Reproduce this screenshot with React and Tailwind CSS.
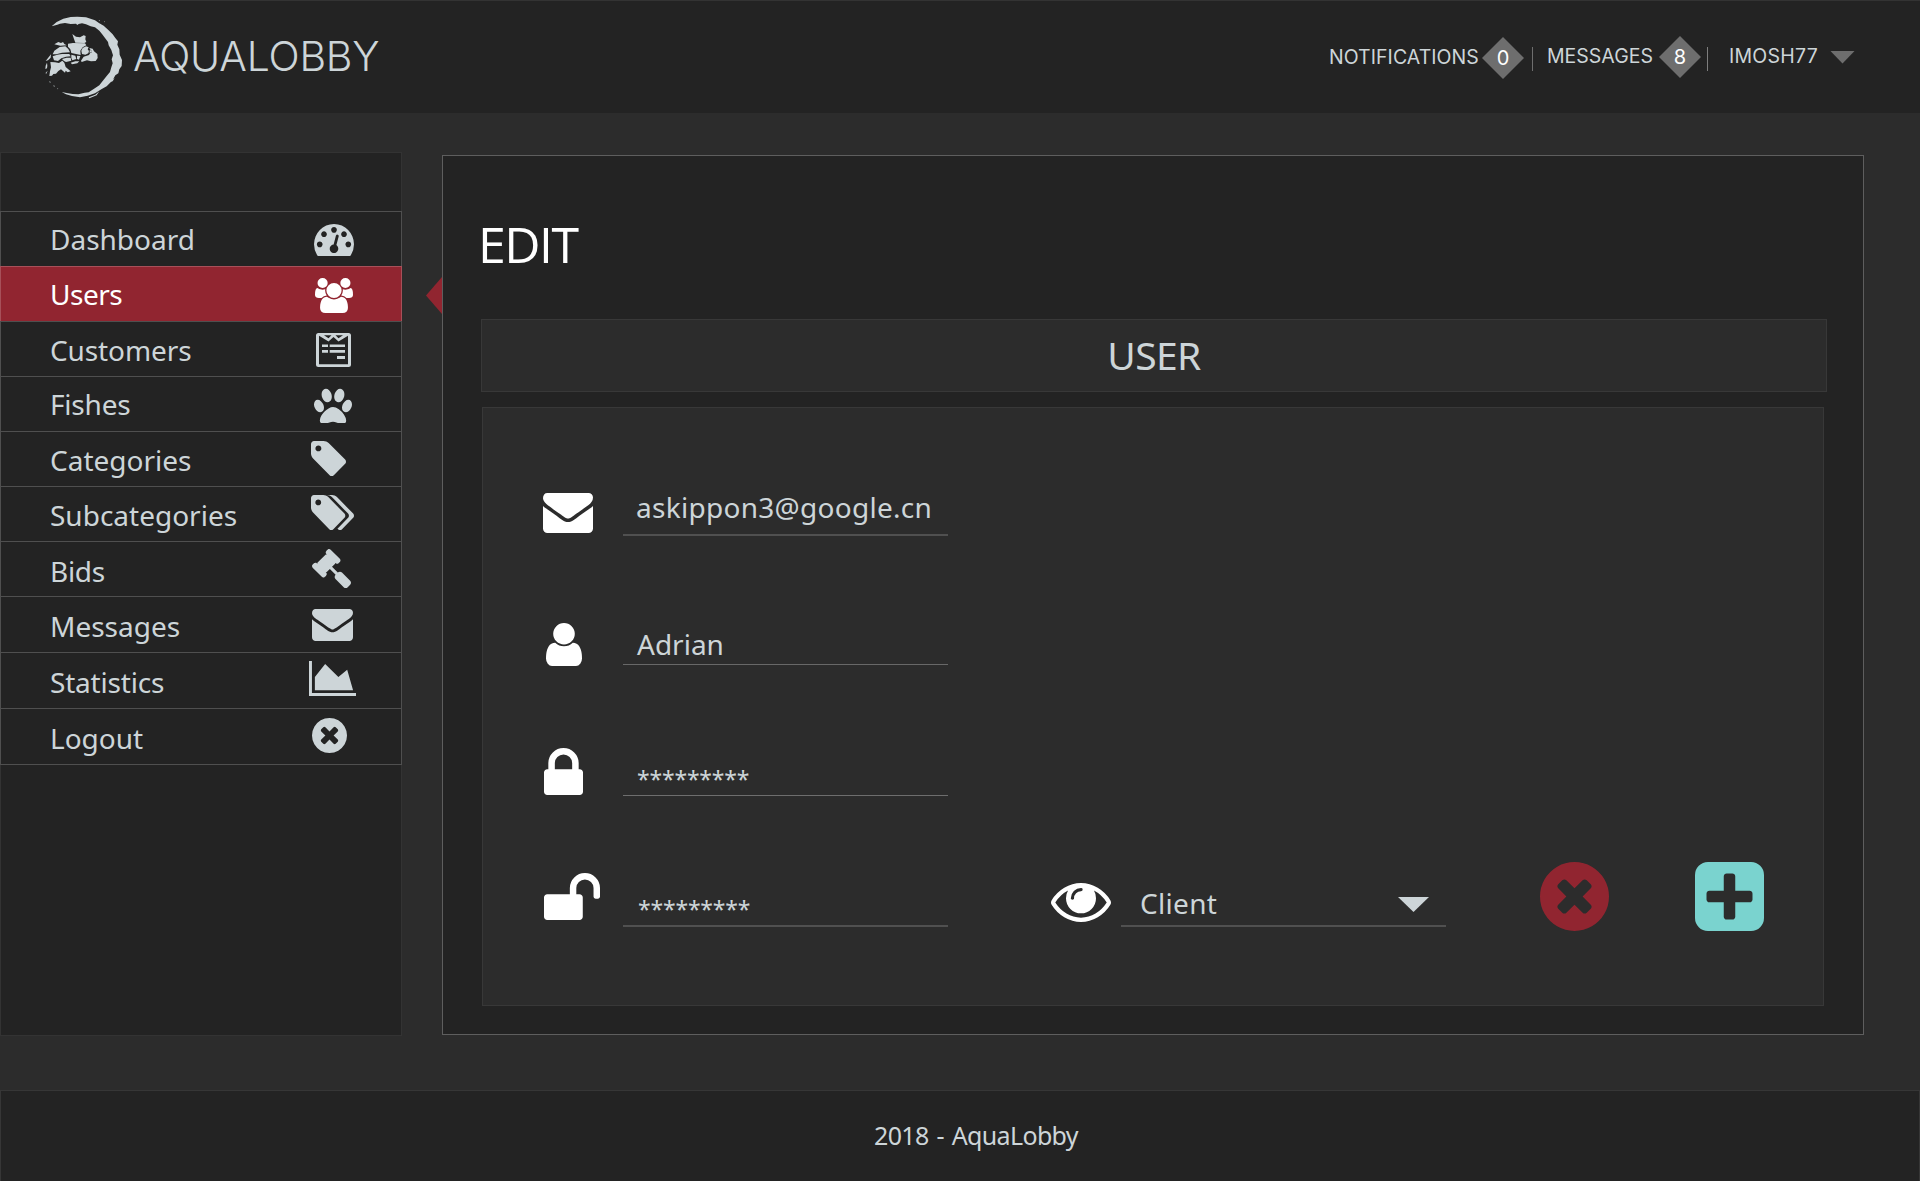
import React from 'react';

/* Icon outlines on a 1792-unit grid, each with the box that its ink fills. */
const ICONS = {
  dashboard: { box: '0 256 1792 1408', d: 'M384 1152q0-53-37.5-90.5t-90.5-37.5-90.5 37.5-37.5 90.5 37.5 90.5 90.5 37.5 90.5-37.5 37.5-90.5zm192-448q0-53-37.5-90.5t-90.5-37.5-90.5 37.5-37.5 90.5 37.5 90.5 90.5 37.5 90.5-37.5 37.5-90.5zm428 481l101-382q6-26-7.5-48.5t-38.5-29.5-48 6.5-30 39.5l-101 382q-60 5-107 43.5t-63 98.5q-20 77 20 146t117 89 146-20 89-117q16-60-6-117t-72-91zm660-33q0-53-37.5-90.5t-90.5-37.5-90.5 37.5-37.5 90.5 37.5 90.5 90.5 37.5 90.5-37.5 37.5-90.5zm-640-640q0-53-37.5-90.5t-90.5-37.5-90.5 37.5-37.5 90.5 37.5 90.5 90.5 37.5 90.5-37.5 37.5-90.5zm448 192q0-53-37.5-90.5t-90.5-37.5-90.5 37.5-37.5 90.5 37.5 90.5 90.5 37.5 90.5-37.5 37.5-90.5zm320 448q0 261-141 483-19 29-54 29h-1402q-35 0-54-29-141-221-141-483 0-182 71-348t191-286 286-191 348-71 348 71 286 191 191 286 71 348z' },
  users: { box: '0 0 1920 1792', d: 'M593 896q-162 5-265 128h-134q-82 0-138-40.5t-56-118.5q0-353 124-353 6 0 43.5 21t97.5 42.5 119 21.5q67 0 133-23-5 37-5 66 0 139 81 256zm1071 637q0 120-73 189.5t-194 69.5h-874q-121 0-194-69.5t-73-189.5q0-53 3.5-103.5t14-109 26.5-108.5 43-97.5 62-81 85.5-53.5 111.5-20q10 0 43 21.5t73 48 107 48 135 21.5 135-21.5 107-48 73-48 43-21.5q61 0 111.5 20t85.5 53.5 62 81 43 97.5 26.5 108.5 14 109 3.5 103.5zm-1024-1277q0 106-75 181t-181 75-181-75-75-181 75-181 181-75 181 75 75 181zm704 384q0 159-112.5 271.5t-271.5 112.5-271.5-112.5-112.5-271.5 112.5-271.5 271.5-112.5 271.5 112.5 112.5 271.5zm576 225q0 78-56 118.5t-138 40.5h-134q-103-123-265-128 81-117 81-256 0-29-5-66 66 23 133 23 59 0 119-21.5t97.5-42.5 43.5-21q124 0 124 353zm-128-609q0 106-75 181t-181 75-181-75-75-181 75-181 181-75 181 75 75 181z' },
  customers: { box: '0 0 35 34', d: 'M2.500 0h30Q35 0 35 2.500v29Q35 34 32.500 34h-30Q0 34 0 31.500v-29Q0 0 2.500 0zM3 2.800v28.400h29V2.800l-9.500 5.700-5-4.500-5 4.500zM8 2.300l4.500 3 3-3zM19.500 2.300l3 3 4.500-3zM6 11.500h6V14H6zM13.700 11.500H29V14H13.700zM6 17h6v2.800H6zM13.700 17H29v2.800H13.700zM21 23h8v3h-8z' },
  paw: { box: '0 128 1664 1536', d: 'M780 508q0 60-19 113.5t-63 92.5-105 39q-76 0-138-57.5t-92-135.5-30-151q0-60 19-113.5t63-92.5 105-39q77 0 138.5 57.5t91.5 135 30 151.5zm-342 483q0 80-42 139t-119 59q-76 0-141.5-55.5t-100.5-133.5-35-152q0-80 42-139.5t119-59.5q76 0 141.5 55.5t100.5 134 35 152.5zm394-27q118 0 255 97.5t229 237 92 254.5q0 46-17 76.5t-48.5 45-64.5 20-76 5.5q-68 0-187.5-45t-182.5-45q-66 0-192.5 44.5t-200.5 44.5q-183 0-183-146 0-86 56-191.5t139.5-192.5 187.5-146 193-59zm239-211q-61 0-105-39t-63-92.5-19-113.5q0-74 30-151.5t91.5-135 138.5-57.5q61 0 105 39t63 92.5 19 113.5q0 73-30 151t-92 135.5-138 57.5zm432-104q77 0 119 59.5t42 139.5q0 74-35 152t-100.5 133.5-141.5 55.5q-77 0-119-59t-42-139q0-74 35-152.5t100.5-134 141.5-55.5z' },
  tag: { box: '0 128 1515 1515', d: 'M448 448q0-53-37.5-90.5t-90.5-37.5-90.5 37.5-37.5 90.5 37.5 90.5 90.5 37.5 90.5-37.5 37.5-90.5zm1067 576q0 53-37 90l-491 492q-39 37-91 37-53 0-90-37l-715-716q-38-37-64.5-101t-26.5-117v-416q0-52 38-90t90-38h416q53 0 117 26.5t102 64.5l715 714q37 39 37 91z' },
  tags: { box: '0 128 1899 1515', d: 'M448 448q0-53-37.5-90.5t-90.5-37.5-90.5 37.5-37.5 90.5 37.5 90.5 90.5 37.5 90.5-37.5 37.5-90.5zm1067 576q0 53-37 90l-491 492q-39 37-91 37-53 0-90-37l-715-716q-38-37-64.5-101t-26.5-117v-416q0-52 38-90t90-38h416q53 0 117 26.5t102 64.5l715 714q37 39 37 91zm384 0q0 53-37 90l-491 492q-39 37-91 37-36 0-59-14t-53-45l470-470q37-37 37-90 0-52-37-91l-715-714q-38-38-102-64.5t-117-26.5h224q53 0 117 26.5t102 64.5l715 714q37 39 37 91z' },
  gavel: { box: '40 40 1731 1731', d: 'M1771 1536q0 53-37 90l-107 108q-39 37-91 37-53 0-90-37l-363-364q-38-36-38-90 0-53 43-96l-256-256-126 126q-14 14-34 14t-34-14q2 2 12.5 12t12.5 13 10 11.5 10 13.5 6 13.5 5.5 16.5 1.5 18q0 38-28 68-3 3-16.5 18t-19 20.5-18.5 16.5-22 15.5-22 9-26 4.500q-40 0-68-28l-408-408q-28-28-28-68 0-13 4.500-26t9-22 15.500-22 16.500-18.500 20.500-19 18-16.500q30-28 68-28 10 0 18 1.500t16.500 5.500 13.500 6 13.500 10 11.500 10 13 12.500 12 12.500q-14-14-14-34t14-34l348-348q14-14 34-14t34 14q-2-2-12.500-12t-12.500-13-10-11.500-10-13.500-6-13.500-5.500-16.500-1.500-18q0-38 28-68 3-3 16.500-18t19-20.500 18.500-16.500 22-15.500 22-9 26-4.500q40 0 68 28l408 408q28 28 28 68 0 13-4.500 26t-9 22-15.500 22-16.500 18.500-20.500 19-18 16.500q-30 28-68 28-10 0-18-1.500t-16.500-5.500-13.500-6-13.500-10-11.500-10-13-12.500-12-12.500q14 14 14 34t-14 34l-126 126 256 256q43-43 96-43 52 0 91 37l363 363q37 39 37 91z' },
  envelope: { box: '0 256 1792 1408', d: 'M1792 710v794q0 66-47 113t-113 47h-1472q-66 0-113-47t-47-113v-794q44 49 101 87 362 246 497 345 57 42 92.5 65.5t94.5 48 110 24.5h2q51 0 110-24.5t94.5-48 92.5-65.5q170-123 498-345 57-39 100-87zm0-294q0 79-49 151t-122 123q-376 261-468 325-10 7-42.500 31t-54 38.500-52 32.500-57.500 27-50 9h-2q-23 0-50-9t-57.500-27-52-32.500-54-38.500-42.500-31q-91-64-262-182.500t-205-142.500q-62-42-117-115.500t-55-136.500q0-78 41.500-130t118.500-52h1472q65 0 112.500 47t47.500 113z' },
  chart: { box: '0 128 2048 1536', d: 'M2048 1536v128h-2048v-1536h128v1408h1920zm-384-1024l256 896h-1664v-576l448-576 576 576z' },
  times: { box: '128 128 1536 1536', d: 'M1277 1122q0-26-19-45l-181-181 181-181q19-19 19-45 0-27-19-46l-90-90q-19-19-46-19-26 0-45 19l-181 181-181-181q-19-19-45-19-27 0-46 19l-90 90q-19 19-19 46 0 26 19 45l181 181-181 181q-19 19-19 45 0 27 19 46l90 90q19 19 46 19 26 0 45-19l181-181 181 181q19 19 45 19 27 0 46-19l90-90q19-19 19-46zm387-226q0 209-103 385.5t-279.5 279.5-385.5 103-385.5-103-279.5-279.5-103-385.5 103-385.5 279.5-279.5 385.5-103 385.5 103 279.5 279.5 103 385.5z' },
  user: { box: '256 128 1280 1536', d: 'M1536 1399q0 109-62.5 187t-150.5 78h-854q-88 0-150.500-78t-62.500-187q0-85 8.500-160.500t31.500-152 58.500-131 94-89 134.500-34.500q131 128 313 128t313-128q76 0 134.500 34.500t94 89 58.500 131 31.500 152 8.500 160.500zm-256-887q0 159-112.500 271.500t-271.500 112.500-271.500-112.500-112.500-271.500 112.500-271.500 271.500-112.500 271.500 112.500 112.500 271.500z' },
  lock: { box: '320 128 1152 1408', d: 'M640 768h512v-192q0-106-75-181t-181-75-181 75-75 181v192zm832 96v576q0 40-28 68t-68 28h-960q-40 0-68-28t-28-68v-576q0-40 28-68t68-28h32v-192q0-184 132-316t316-132 316 132 132 316v192h32q40 0 68 28t28 68z' },
  unlock: { box: '64 128 1664 1408', d: 'M1728 576v256q0 26-19 45t-45 19h-64q-26 0-45-19t-19-45v-256q0-106-75-181t-181-75-181 75-75 181v192h96q40 0 68 28t28 68v576q0 40-28 68t-68 28h-960q-40 0-68-28t-28-68v-576q0-40 28-68t68-28h672v-192q0-185 131.5-316.5t316.5-131.5 316.5 131.5 131.5 316.5z' },
  eye: { box: '0 384 1792 1152', d: 'M1664 960q-152-236-381-353 61 104 61 225 0 185-131.5 316.5t-316.5 131.5-316.5-131.5-131.5-316.5q0-121 61-225-229 117-381 353 133 205 333.5 326.5t434.5 121.5 434.5-121.5 333.5-326.5zm-720-384q0-20-14-34t-34-14q-125 0-214.5 89.5t-89.5 214.5q0 20 14 34t34 14 34-14 14-34q0-86 61-147t147-61q20 0 34-14t14-34zm848 384q0 34-20 69-140 230-376.5 368.5t-499.5 138.5-499.5-139-376.5-368q-20-35-20-69t20-69q140-229 376.5-368t499.5-139 499.5 139 376.5 368q20 35 20 69z' },
  plus: { box: '128 128 1536 1536', d: 'M1408 960v-128q0-26-19-45t-45-19h-320v-320q0-26-19-45t-45-19h-128q-26 0-45 19t-19 45v320h-320q-26 0-45 19t-19 45v128q0 26 19 45t45 19h320v320q0 26 19 45t45 19h128q26 0 45-19t19-45v-320h320q26 0 45-19t19-45zm256-544v960q0 119-84.5 203.5t-203.5 84.5h-960q-119 0-203.5-84.5t-84.5-203.5v-960q0-119 84.5-203.5t203.5-84.5h960q119 0 203.5 84.5t84.5 203.5z' },
};

function Icon({ name, className }) {
  const { box, d } = ICONS[name];
  return (
    <svg viewBox={box} preserveAspectRatio="none" fill="currentColor" fillRule={name === 'customers' ? 'evenodd' : 'nonzero'} className={`shrink-0 ${className}`} aria-hidden="true">
      <path d={d} />
    </svg>
  );
}

const MENU = [
  { label: 'Dashboard', icon: 'dashboard', row: 'h-[55px]', text: '', pos: 'ml-1 mt-3 w-10 h-8' },
  { label: 'Users', icon: 'users', row: 'h-[55px]', text: 'tracking-[-0.5px]', pos: 'ml-[5px] mt-[11px] w-[38px] h-[35px]', active: true },
  { label: 'Customers', icon: 'customers', row: 'h-[55px]', text: 'pt-px tracking-[-0.1px]', pos: 'ml-1.5 mt-[11px] w-[35px] h-[34px]' },
  { label: 'Fishes', icon: 'paw', row: 'h-[55px]', text: 'tracking-[-0.2px]', pos: 'ml-1 mt-[11px] w-[38px] h-[35px]' },
  { label: 'Categories', icon: 'tag', row: 'h-[55px]', text: 'pt-px', pos: 'ml-px mt-[9px] w-[35px] h-[35px]' },
  { label: 'Subcategories', icon: 'tags', row: 'h-[55px]', text: 'pt-px', pos: 'ml-px mt-2 w-[43px] h-[35px]' },
  { label: 'Bids', icon: 'gavel', row: 'h-[55px]', text: 'pt-0.5 tracking-[-0.3px]', pos: 'ml-0.5 mt-[7px] w-[39px] h-[39px]' },
  { label: 'Messages', icon: 'envelope', row: 'h-[56px]', text: 'pt-0.5', pos: 'ml-0.5 mt-3 w-[41px] h-8' },
  { label: 'Statistics', icon: 'chart', row: 'h-[56px]', text: 'pt-0.5 tracking-[-0.2px]', pos: '-ml-px mt-2 w-[47px] h-[35px]' },
  { label: 'Logout', icon: 'times', row: 'h-[57px] border-b', text: 'pt-0.5', pos: 'ml-0.5 mt-[9px] w-[35px] h-[35px]' },
];

function Logo() {
  return (
    <svg viewBox="0 0 270 285" className="h-[95px] w-[90px]" fill="currentColor" aria-hidden="true">
      <path d="M47 49L62 36 82 26 104 21 124 20 150 22 177 31 190 40 203 47 217 60 230 73 238 84 246 94 244 104 250 118 251 134 258 150 257 168 250 178 247 190 238 196 230 211 212 229 196 238 177 250 155 257 132 262 108 258 90 253 77 246 92 249 110 252 127 253 146 248 158 247 172 238 190 226 200 213 212 198 222 186 226 172 230 160 227 148 231 136 226 120 218 106 216 96 207 84 198 72 190 62 177 52 164 49 150 43 138 40 128 42 124 45 120 41 104 42 87 39 72 41 64 44z" />
      <path d="M188 30l4 2-2 2zM204 34l3 1-2 2zM222 216l14-12-6 10zM158 262l20-8 12-10-8 12-22 9zM40 213l4 3-2 3zM52 226l5 2-3 2zM63 235l4 1-2 2z" />
      <path d="M109 72l11 8 12 2 11-6 6 2-1 10 3 8-6 3-27-1-4-11z" />
      <path d="M96 101l15-2 36 1 4 6-11 6-7 10 1 13-28-6-3-11-7-8z" />
      <path d="M150 109l8 3-3 6 4 5-2 7-9 4-10-2-2-10 4-8z" />
      <path fillRule="evenodd" d="M160 114l10 2 4 8 10 8 1 12-6 9-14 1-12-3-16 5-2-4 8-12 16-5 7-11zM161 121h5v8h-5z" />
      <path d="M55 103l12-7 8 3 6-3 4 6 7 4-19 1z" />
      <path d="M71 111l17-2 9 8 5 10-24 1-17 5-11 0 5-11z" />
      <path d="M50 139l14-5 14-2 22 0 4 7-14 1-14 5-10 8-12-2z" />
      <path d="M43 156l14 1 12 2 10-7 6 6 4 13 15 13-9 3-6-5-2 6-12-10-8 5-7 8-8 1-4 5-8 1 2-14 3-12z" />
      <path d="M45 133l-6 7-10 13 7-2 8-8zM33 158l-4 9-1 10 5-2 1-8zM35 182l-6 6 1 5zM78 147l14-4 12 0 2 9-16 4-6-3z" />
      <path d="M106 134l12 3 3 10-12 4-3-7zM123 137l10 1-4 11-6-2zM104 158l14-4 12 0-6 6-16 3z" />
    </svg>
  );
}

function Diamond({ value, className }) {
  return (
    <span className={`grid h-[42px] w-[42px] shrink-0 place-items-center bg-[#6e6e6e] font-normal text-[20px] text-white [clip-path:polygon(50%_0,100%_50%,50%_100%,0_50%)] ${className}`}>
      {value}
    </span>
  );
}

function Header() {
  return (
    <header className="flex h-[113px] items-center border-t border-[#333] bg-[#232323] pl-9 font-['Inter',sans-serif]">
      <Logo />
      <h1 className="mb-0.5 ml-[7px] text-[41px] leading-none font-[350] tracking-[-0.2px]">AQUALOBBY</h1>
      <nav className="ml-auto mr-[65px] flex items-center text-[19.5px] leading-none font-[370]">
        <span className="w-[154px] pl-px pt-0.5 tracking-[0.05px]">NOTIFICATIONS</span>
        <Diamond value="0" className="mt-0.5" />
        <span className="ml-2 mt-1 h-6 w-px bg-[#6e6e6e]" />
        <span className="ml-3.5 w-28">MESSAGES</span>
        <Diamond value="8" className="" />
        <span className="ml-1.5 mt-1 h-6 w-px bg-[#7e7e7e]" />
        <span className="ml-[21px] w-[101px] tracking-[0.25px]">IMOSH77</span>
        <span className="h-[13px] w-[25px] bg-[#6e6e6e] [clip-path:polygon(0_0,100%_0,50%_100%)]" />
      </nav>
    </header>
  );
}

function Sidebar() {
  return (
    <aside className="flex h-[884px] w-[402px] flex-col bg-[#232323]">
      <div className="h-[59px] border-x border-t border-[#333]" />
      <ul>
        {MENU.map((m) => (
          <li key={m.label} className={`flex border-x border-t border-white/20 pl-[49px] ${m.row} ${m.active ? 'bg-[#912530] text-white' : ''}`}>
            <span className={`w-[260px] text-[28px] leading-[54px] ${m.text}`}>{m.label}</span>
            <Icon name={m.icon} className={m.pos} />
          </li>
        ))}
      </ul>
      <div className="grow border-x border-b border-[#333]" />
    </aside>
  );
}

function Field({ icon, iconClass, rowClass, textClass, value, lineClass }) {
  return (
    <div className={`flex ${rowClass}`}>
      <div className="w-[140px] text-white">
        <Icon name={icon} className={iconClass} />
      </div>
      <div className={`flex w-[325px] items-end pl-[13px] leading-none ${lineClass}`}>
        <span className={textClass}>{value}</span>
      </div>
    </div>
  );
}

function UserForm() {
  return (
    <section className="ml-[39px] mt-[15px] h-[599px] w-[1342px] border border-[#383838] bg-[#2c2c2c]">
      <Field icon="envelope" iconClass="ml-[60px] mt-[85px] h-10 w-[50px]" rowClass="h-[128px]" value="askippon3@google.cn" textClass="pb-[13px] text-[28px] tracking-[0.28px]" lineClass="border-b-2 border-[#505050]" />
      <Field icon="user" iconClass="ml-[63px] mt-[87px] h-[43px] w-9" rowClass="h-[129px]" value="Adrian" textClass="pb-1.5 text-[28px] ml-[1px]" lineClass="border-b border-[#686868]" />
      <Field icon="lock" iconClass="ml-[61px] mt-[83px] h-[47px] w-[39px]" rowClass="h-[131px]" value="*********" textClass="pb-1 pl-px text-[23px] tracking-[-0.2px]" lineClass="border-b border-[#6e6e6e]" />
      <div className="flex">
        <Field icon="unlock" iconClass="ml-[61px] mt-[77px] h-[47px] w-14" rowClass="h-[131px]" value="*********" textClass="pb-1 pl-0.5 text-[23px] tracking-[-0.2px]" lineClass="border-b-2 border-[#505050]" />
        <Icon name="eye" className="ml-[103px] mt-[87px] h-[39px] w-[60px] text-white" />
        <div className="ml-2.5 flex h-[131px] w-[325px] items-end border-b-2 border-[#505050] pl-[19px] leading-none">
          <span className="w-[258px] pb-2 text-[28px] tracking-[0.3px]">Client</span>
          <span className="mb-[13px] h-[15px] w-[31px] bg-[#cdd5d8] [clip-path:polygon(0_0,100%_0,50%_100%)]" />
        </div>
        <button type="button" aria-label="Cancel" className="ml-[94px] mt-[66px] h-[69px] text-[#912530]">
          <Icon name="times" className="h-[69px] w-[69px]" />
        </button>
        <button type="button" aria-label="Add" className="ml-[86px] mt-[66px] h-[69px] text-[#7ad3cf]">
          <Icon name="plus" className="h-[69px] w-[69px]" />
        </button>
      </div>
    </section>
  );
}

export default function App() {
  return (
    <div className="flex h-[1181px] w-[1920px] flex-col overflow-hidden bg-[#2c2c2c] font-['Noto_Sans',sans-serif] text-[#cdd5d8]">
      <Header />
      <div className="mt-[39px] flex">
        <Sidebar />
        <div className="ml-6 mt-[125px] h-[37px] w-4 bg-[#912530] [clip-path:polygon(100%_0,100%_100%,0_50%)]" />
        <main className="mt-[3px] h-[880px] w-[1422px] border border-[#5e5e5e] bg-[#232323]">
          <h2 className="ml-[35px] mt-[63px] font-['Open_Sans',sans-serif] text-[50px] leading-none tracking-[-1.5px] text-white">EDIT</h2>
          <div className="ml-[38px] mt-[50px] flex h-[73px] w-[1346px] items-center justify-center border border-[#383838] bg-[#2c2c2c] pb-0.5 text-[39px] leading-none tracking-[-0.6px]">
            USER
          </div>
          <UserForm />
        </main>
      </div>
      <footer className="mt-auto flex h-[91px] items-center justify-center border-x border-t border-[#363636] bg-[#232323] pb-0.5 pl-8 text-[25px] leading-none tracking-[-0.65px] [word-spacing:2px]">
        2018 - AquaLobby
      </footer>
    </div>
  );
}
